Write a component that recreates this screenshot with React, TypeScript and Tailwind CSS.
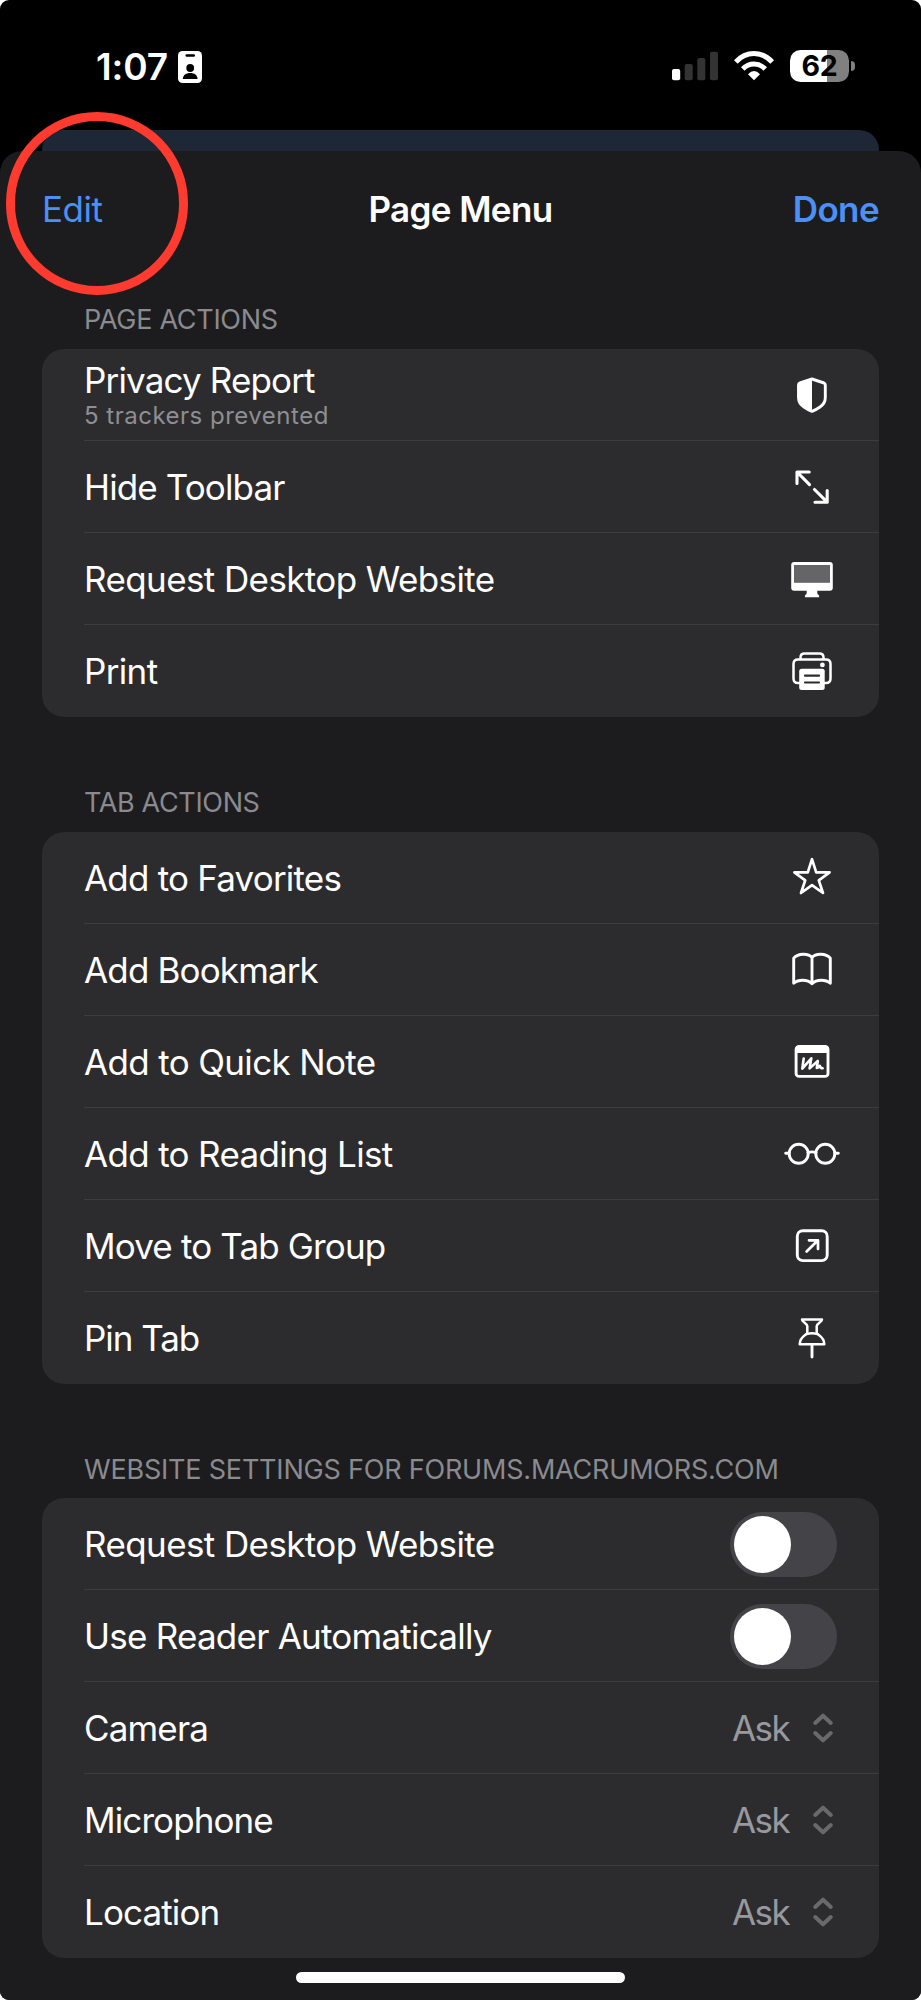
import type { ReactNode } from "react";
import clsx from "clsx";

type Row = {
  label: string;
  tracking: string;
  subtitle?: string;
  icon?: ReactNode;
  control?: "switch" | "ask";
};

type Section = {
  title: string;
  titleClass: string;
  rows: Row[];
};

function Icon({ children }: { children: ReactNode }) {
  return (
    <svg
      viewBox="0 0 60 60"
      className="h-[60px] w-[60px] shrink-0"
      fill="none"
      stroke="white"
      strokeWidth="2.9"
      strokeLinecap="round"
      strokeLinejoin="round"
    >
      {children}
    </svg>
  );
}

const shieldIcon = (
  <Icon>
    <path d="M30 14 L42 18 Q43.3 18.5 43.3 20 V32.5 Q43.3 38.5 38 42 Q34.5 44.5 30 46.4 Q25.5 44.5 22 42 Q16.5 38.5 16.5 32.5 V20 Q16.5 18.5 18 18 Z" />
    <path d="M30 14 L18 18 Q16.5 18.5 16.5 20 V32.5 Q16.5 38.5 22 42 Q25.5 44.5 30 46.4 Z" fill="white" stroke="none" />
  </Icon>
);

const expandIcon = (
  <Icon>
    <path strokeWidth="3.1" d="M27.2 15 H15 V26.5 M15.5 15.5 L27.5 27.7 M33 45.2 H45.2 V33.5 M44.7 44.7 L32.5 32.5" />
  </Icon>
);

const desktopIcon = (
  <Icon>
    <g stroke="none" fill="white">
      <rect x="9.2" y="13" width="41.6" height="28.7" rx="3" />
      <rect x="12" y="16" width="36" height="17.8" fill="#656567" />
      <path d="M24.7 41 H35.3 V44 Q35.3 45.3 36.2 45.5 Q37.2 45.8 37.2 48.2 H22.9 Q22.9 45.8 23.8 45.5 Q24.7 45.3 24.7 44 Z" />
    </g>
  </Icon>
);

const printIcon = (
  <Icon>
    <g strokeWidth="2.5">
      <path d="M18.5 42 H16 Q11.5 42 11.5 37.5 V23 Q11.5 18.5 16 18.5 H44 Q48.5 18.5 48.5 23 V37.5 Q48.5 42 44 42 H42" />
      <path d="M18.5 18 V16.5 Q18.5 12.6 22.5 12.6 H37.5 Q41.5 12.6 41.5 16.5 V18" />
    </g>
    <circle cx="40.4" cy="23.9" r="2.4" fill="white" stroke="none" />
    <rect x="17.2" y="27.7" width="25.5" height="21.3" rx="2.5" fill="white" stroke="none" />
    <path stroke="#2c2c2e" strokeWidth="2.2" d="M23 34.7 H37 M23 41.5 H37" />
  </Icon>
);

const starIcon = (
  <Icon>
    <path strokeWidth="2.7" d="M30 11.2 L34.2 24.3 H47.6 L36.8 32.4 L41 45 L30 37.1 L19 45 L23.2 32.4 L12.4 24.3 H25.8 Z" />
  </Icon>
);

const bookIcon = (
  <Icon>
    <path d="M30 17.5 C26.5 13 16 13 11.7 18.2 V43.3 C16 39.3 25.5 39 30 43.7 C34.5 39 44 39.3 48.3 43.3 V18.2 C44 13 33.5 13 30 17.5 Z M30 17.5 V43.7" />
  </Icon>
);

const quickNoteIcon = (
  <Icon>
    <rect x="14.1" y="14.4" width="31.9" height="30" rx="3" />
    <path d="M13.5 21 V16.5 Q13.5 13.8 17 13.8 H43 Q46.5 13.8 46.5 16.5 V21 Z" fill="white" stroke="none" />
    <path strokeWidth="2.6" d="M21.7 26.5 L20.3 36.6 L29.3 26.3 L27.6 36.4 L35.8 29 L34.8 36 Q36.5 35.8 37.8 33.8 Q38.5 36.3 40.6 36.2" />
  </Icon>
);

const glassesIcon = (
  <Icon>
    <circle cx="16.7" cy="29.7" r="9.5" />
    <circle cx="43.3" cy="29.7" r="9.5" />
    <path d="M3.7 29.2 H7 M53 29.2 H56.3 M26 28.7 Q30 27 34 28.7" />
  </Icon>
);

const moveIcon = (
  <Icon>
    <rect x="15.3" y="14.7" width="29.9" height="29.9" rx="5.5" />
    <path strokeWidth="2.7" d="M24.6 35.5 L35.7 24.5 M27 24.3 H36 V33" />
  </Icon>
);

const pinIcon = (
  <Icon>
    <path strokeWidth="2.5" d="M20 11.5 H40 C40 14 34.7 15.5 34.7 18 V24.5 C34.7 27 42.3 28 42.3 36.3 H17.7 C17.7 28 25.3 27 25.3 24.5 V18 C25.3 15.5 20 14 20 11.5 Z" />
    <path d="M24.5 26.3 Q30 24.2 35.5 26.3" strokeWidth="2.3" />
    <path d="M30 37 V49" />
  </Icon>
);

const sections: Section[] = [
  {
    title: "PAGE ACTIONS",
    titleClass: "h-[51px] tracking-[-0.3px]",
    rows: [
      { label: "Privacy Report", tracking: "tracking-[-0.85px]", subtitle: "5 trackers prevented", icon: shieldIcon },
      { label: "Hide Toolbar", tracking: "tracking-[-0.88px]", icon: expandIcon },
      { label: "Request Desktop Website", tracking: "tracking-[-0.6px]", icon: desktopIcon },
      { label: "Print", tracking: "tracking-[-0.65px]", icon: printIcon },
    ],
  },
  {
    title: "TAB ACTIONS",
    titleClass: "h-[51px] tracking-[-0.35px]",
    rows: [
      { label: "Add to Favorites", tracking: "tracking-[-0.8px]", icon: starIcon },
      { label: "Add Bookmark", tracking: "tracking-[-0.85px]", icon: bookIcon },
      { label: "Add to Quick Note", tracking: "tracking-[-0.66px]", icon: quickNoteIcon },
      { label: "Add to Reading List", tracking: "tracking-[-0.67px]", icon: glassesIcon },
      { label: "Move to Tab Group", tracking: "tracking-[-0.85px]", icon: moveIcon },
      { label: "Pin Tab", tracking: "tracking-[-1.05px]", icon: pinIcon },
    ],
  },
  {
    title: "WEBSITE SETTINGS FOR FORUMS.MACRUMORS.COM",
    titleClass: "h-[50px] tracking-[-0.2px]",
    rows: [
      { label: "Request Desktop Website", tracking: "tracking-[-0.6px]", control: "switch" },
      { label: "Use Reader Automatically", tracking: "tracking-[-0.76px]", control: "switch" },
      { label: "Camera", tracking: "tracking-[-0.85px]", control: "ask" },
      { label: "Microphone", tracking: "tracking-[-0.9px]", control: "ask" },
      { label: "Location", tracking: "tracking-[-0.87px]", control: "ask" },
    ],
  },
];

function StatusBar() {
  return (
    <div className="flex h-[130px] items-start pt-[50px] pr-[66px] pl-[96px]">
      <span className="mt-px h-8 w-[71px] text-[37px] leading-8 font-semibold tracking-[-0.1px] text-white">1:07</span>
      <svg viewBox="0 0 24 32" className="mt-px ml-[11px] h-8 w-6">
        <rect width="24" height="32" rx="4.5" fill="white" />
        <rect x="7.5" y="3.3" width="9.5" height="2.5" rx="1.2" />
        <circle cx="12.2" cy="17" r="3.9" />
        <path d="M4.8 28 C5 24 8 22 12.2 22 C16.4 22 19.4 24 19.6 28 Z" />
      </svg>

      <div className="ml-auto flex">
        <svg viewBox="0 0 46 32" className="h-8 w-[46px]">
          <rect x="0" y="19" width="8.2" height="11.3" rx="2" fill="white" />
          <g fill="#333333">
            <rect x="12.7" y="14" width="8" height="16.3" rx="2" />
            <rect x="25.3" y="8" width="8" height="22.3" rx="2" />
            <rect x="38" y="1.7" width="8" height="28.6" rx="2" />
          </g>
        </svg>
        <svg viewBox="0 0 40 32" className="ml-4 h-8 w-10" fill="none" stroke="white" strokeWidth="5">
          <path d="M1.8 12 Q9.5 3.6 20 3.6 Q30.5 3.6 38.2 12" />
          <path d="M8.8 19 Q13.5 14 20 14 Q26.5 14 31.2 19" />
          <path d="M14 24.2 Q20 18 26 24.2 L20 30.2 Z" fill="white" stroke="none" />
        </svg>
        <div className="ml-4 flex h-8 items-center">
          <div className="flex h-[31.5px] w-[59px] items-center justify-center rounded-[10.5px] bg-linear-to-r from-white from-62% to-[#808080] to-62% text-[28.5px] font-bold tracking-[-0.3px] text-black">
            62
          </div>
          <div className="ml-[2px] h-[10px] w-[4px] rounded-r-full bg-[#808080]" />
        </div>
      </div>
    </div>
  );
}

function Switch() {
  return (
    <div className="mt-px mr-[42px] flex h-[65px] w-[107px] items-center rounded-full bg-[#444448] px-1">
      <div className="h-[57px] w-[57px] rounded-full bg-white" />
    </div>
  );
}

function AskPicker() {
  return (
    <div className="mt-px mr-[44px] flex items-center text-[#98989f]">
      <span className="text-[35px] leading-[42px] tracking-[-1.6px]">Ask</span>
      <svg
        viewBox="0 0 24 32"
        className="ml-[22px] h-8 w-6"
        fill="none"
        stroke="#69696b"
        strokeWidth="4"
        strokeLinecap="round"
        strokeLinejoin="round"
      >
        <path d="M4.2 11 L12 3.7 L19.8 11 M4.2 21 L12 28.3 L19.8 21" />
      </svg>
    </div>
  );
}

function MenuRow({ row, last }: { row: Row; last: boolean }) {
  return (
    <div
      className={clsx(
        "ml-[42px] flex h-[92px] items-center justify-between border-b",
        last ? "border-transparent" : "border-[#3d3d40]"
      )}
    >
      <div className="flex flex-col whitespace-nowrap">
        <span className={clsx("text-[35px] text-white", row.subtitle ? "mt-1 leading-[38px]" : "leading-[42px]", row.tracking)}>
          {row.label}
        </span>
        {row.subtitle && (
          <span className="text-[24px] leading-[34px] tracking-[0.5px] text-[#8e8e93]">{row.subtitle}</span>
        )}
      </div>
      {row.icon && <div className="mr-[37px]">{row.icon}</div>}
      {row.control === "switch" && <Switch />}
      {row.control === "ask" && <AskPicker />}
    </div>
  );
}

export default function App() {
  return (
    <div className="h-[2000px] w-[921px] bg-white font-['Inter',sans-serif]">
      <div className="relative h-full overflow-hidden rounded-[9px] bg-black">
        <StatusBar />
        <div className="mx-[42px] h-[21px] rounded-t-[20px] bg-[#1d2735]" />

        <div className="h-[1849px] rounded-t-[22px] bg-[#1c1c1e]">
          <div className="grid h-[117px] grid-cols-3 items-center px-[42px] text-[35px] text-[#4a90f7]">
            <span className="tracking-[-0.5px]">Edit</span>
            <span className="text-center font-semibold tracking-[-0.6px] whitespace-nowrap text-white">Page Menu</span>
            <span className="text-right font-semibold tracking-[-0.6px]">Done</span>
          </div>

          <div className="mt-[30px] flex flex-col gap-[64px] px-[42px]">
            {sections.map((section) => (
              <section key={section.title}>
                <h2
                  className={clsx(
                    "ml-[42px] text-[27px] leading-[44px] whitespace-nowrap text-[#8a8a8f]",
                    section.titleClass
                  )}
                >
                  {section.title}
                </h2>
                <div className="rounded-[22px] bg-[#2c2c2e]">
                  {section.rows.map((row, i) => (
                    <MenuRow key={row.label} row={row} last={i === section.rows.length - 1} />
                  ))}
                </div>
              </section>
            ))}
          </div>

          <div className="mx-auto mt-[14px] h-[11px] w-[329px] rounded-full bg-white" />
        </div>

        {/* highlight ring around the Edit button */}
        <div className="absolute top-[112px] left-[6px] h-[183px] w-[182px] rounded-full border-[9px] border-[#ff3b30]" />
      </div>
    </div>
  );
}
